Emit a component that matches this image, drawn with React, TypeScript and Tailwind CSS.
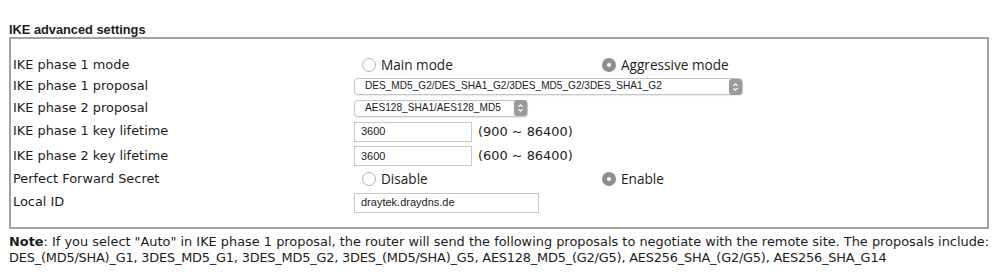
import React from "react";

const labelFont = "font-['DejaVu_Sans',Verdana,sans-serif] text-[12.9px] text-[#1c1c1c]";
const radioFont = "font-['Open_Sans',sans-serif] text-[13.6px] text-[#1c1c1c]";

const Radio: React.FC<{ checked?: boolean; label: string; width?: string }> = ({
  checked,
  label,
  width,
}) => (
  <div className={`flex items-center ${width ?? ""}`}>
    {checked ? (
      <span className="w-[14px] h-[14px] rounded-full bg-[#8f8f8f] flex items-center justify-center">
        <span className="w-[4px] h-[4px] rounded-full bg-white" />
      </span>
    ) : (
      <span className="w-[14px] h-[14px] rounded-full border border-[#b4b4b4] bg-white" />
    )}
    <span className={`ml-[5px] ${radioFont}`}>{label}</span>
  </div>
);

const Stepper: React.FC = () => (
  <span className="w-[13px] h-[16px] rounded-[3px] bg-[#9b9b9b] flex items-center justify-center">
    <svg width="7" height="10" viewBox="0 0 7 10" fill="none">
      <path d="M1.5 3.8 L3.5 1.8 L5.5 3.8" stroke="white" strokeWidth="1.1" />
      <path d="M1.5 6.2 L3.5 8.2 L5.5 6.2" stroke="white" strokeWidth="1.1" />
    </svg>
  </span>
);

const Select: React.FC<{ value: string; width: string }> = ({ value, width }) => (
  <div
    className={`${width} h-[17px] flex items-center justify-between rounded-[4px] border border-[#c6c6c6] bg-white shadow-[0_1px_1px_rgba(0,0,0,0.08)]`}>
    <span className="pl-[10px] font-['Liberation_Sans',Arial,sans-serif] text-[10.1px] text-[#1c1c1c] leading-none">
      {value}
    </span>
    <Stepper />
  </div>
);

const TextInput: React.FC<{ value: string; width: string }> = ({ value, width }) => (
  <div
    className={`${width} h-[20px] flex items-center border border-[#c9c9c9] bg-white pl-[6px] font-['Liberation_Sans',Arial,sans-serif] text-[11px] text-[#1c1c1c]`}>
    {value}
  </div>
);

const rows: { label: string; h: string; value: React.ReactNode }[] = [
  {
    label: "IKE phase 1 mode",
    h: "h-[22px]",
    value: (
      <div className="flex items-center pl-[8px]">
        <Radio label="Main mode" width="w-[240px]" />
        <Radio label="Aggressive mode" checked />
      </div>
    ),
  },
  {
    label: "IKE phase 1 proposal",
    h: "h-[21px]",
    value: <Select value="DES_MD5_G2/DES_SHA1_G2/3DES_MD5_G2/3DES_SHA1_G2" width="w-[389px]" />,
  },
  {
    label: "IKE phase 2 proposal",
    h: "h-[22px]",
    value: <Select value="AES128_SHA1/AES128_MD5" width="w-[174px]" />,
  },
  {
    label: "IKE phase 1 key lifetime",
    h: "h-[25px]",
    value: (
      <div className="flex items-center">
        <TextInput value="3600" width="w-[118px]" />
        <span className={`ml-[6px] ${labelFont}`}>(900 ~ 86400)</span>
      </div>
    ),
  },
  {
    label: "IKE phase 2 key lifetime",
    h: "h-[24px]",
    value: (
      <div className="flex items-center">
        <TextInput value="3600" width="w-[118px]" />
        <span className={`ml-[6px] ${labelFont}`}>(600 ~ 86400)</span>
      </div>
    ),
  },
  {
    label: "Perfect Forward Secret",
    h: "h-[23px]",
    value: (
      <div className="flex items-center pl-[8px]">
        <Radio label="Disable" width="w-[240px]" />
        <Radio label="Enable" checked />
      </div>
    ),
  },
  {
    label: "Local ID",
    h: "h-[23px]",
    value: <TextInput value="draytek.draydns.de" width="w-[185px]" />,
  },
];

const App: React.FC = () => {
  return (
    <div className="w-[1000px] h-[278px] bg-white pt-[22px] pl-[9px] overflow-hidden">
      <div className="h-[15px] font-['Liberation_Sans',Arial,sans-serif] font-bold text-[12.8px] leading-[15px] text-[#1c1c1c]">
        IKE advanced settings
      </div>
      <div className="w-[980px] border-2 border-[#a2a2a2] pt-[15px] pb-[13px]">
        {rows.map((r) => (
          <div key={r.label} className={`grid grid-cols-[343px_1fr] items-center ${r.h}`}>
            <div className={`pl-[2px] ${labelFont} leading-none`}>{r.label}</div>
            <div>{r.value}</div>
          </div>
        ))}
      </div>
      <p
        className={`mt-[5px] whitespace-nowrap ${labelFont} leading-[16px]`}>
        <b>Note</b>: If you select "Auto" in IKE phase 1 proposal, the router will send the following
        proposals to negotiate with the remote site. The proposals include:
        <br />
        <span className="tracking-[-0.2px]">
          DES_(MD5/SHA)_G1, 3DES_MD5_G1, 3DES_MD5_G2, 3DES_(MD5/SHA)_G5, AES128_MD5_(G2/G5),
          AES256_SHA_(G2/G5), AES256_SHA_G14
        </span>
      </p>
    </div>
  );
};

export default App;
